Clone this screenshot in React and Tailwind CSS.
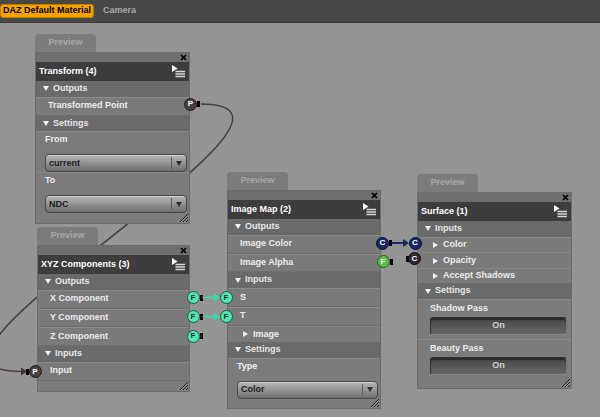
import React from "react";

function CloseX() {
  return (
    <svg width="7" height="7" viewBox="0 0 7 7">
      <path d="M1 1L6 6M6 1L1 6" stroke="#000" strokeWidth="1.7" />
    </svg>
  );
}

function MenuIcon() {
  return (
    <svg width="13" height="13" viewBox="0 0 13 13">
      <polygon points="0,0 0,7 5.5,3.5" fill="#ffffff" />
      <path d="M3.5 6.5H13M3.5 9H13M3.5 11.5H13" stroke="#d6d6d6" strokeWidth="1.3" />
    </svg>
  );
}

function Grip() {
  return (
    <svg width="9" height="9" viewBox="0 0 9 9">
      <path d="M9 1L1 9M9 4L4 9M9 7L7 9" stroke="#1c1c1c" strokeWidth="1" />
      <path d="M9 2.3L2.3 9M9 5.3L5.3 9" stroke="#a8a8a8" strokeWidth="0.8" />
    </svg>
  );
}

function Down({ fill = "#f0f0f0" }) {
  return (
    <svg width="6" height="5" viewBox="0 0 6 5">
      <polygon points="0,0 6,0 3,5" fill={fill} />
    </svg>
  );
}

function Right() {
  return (
    <svg width="5" height="6" viewBox="0 0 5 6">
      <polygon points="0,0 5,3 0,6" fill="#f0f0f0" />
    </svg>
  );
}

function Node({ pos, title, children, bottom }) {
  return (
    <div className={`absolute ${pos} flex flex-col`}>
      <div className="w-[61px] h-[18px] rounded-t-[4px] bg-[#7c7c7c] text-[#a6a6a6] text-[9px] font-bold flex items-center justify-center">
        Preview
      </div>
      <div className="flex flex-col bg-[#7b7b7b] border border-[#6c6c6c]">
        <div className="h-[9px] bg-[#6f6f6f] flex items-center justify-end pr-[2px]">
          <CloseX />
        </div>
        <div className="h-[19px] bg-[#3d3d3d] flex items-center justify-between pl-[3px] pr-[4px] text-white text-[9px] font-bold">
          <span>{title}</span>
          <MenuIcon />
        </div>
        {children}
        <div className={`${bottom} flex items-end justify-end pr-[1px] pb-[1px]`}>
          <Grip />
        </div>
      </div>
    </div>
  );
}

function Header({ label }) {
  return (
    <div className="h-[15.75px] bg-[#6a6a6a] flex items-center pl-[7px] gap-[4px] text-[9px] font-bold text-[#e6e6e6]">
      <Down />
      <span>{label}</span>
    </div>
  );
}

function Row({ label }) {
  return (
    <div className="h-[18.75px] bg-[#7a7a7a] border-t border-t-[#8a8a8a] border-b border-b-[#6e6e6e] flex items-center pl-[12px] text-[9px] font-bold text-[#ececec]">
      {label}
    </div>
  );
}

function Collapsed({ label, h }) {
  return (
    <div className={`${h} bg-[#7a7a7a] border-t border-t-[#868686] flex items-center pl-[15px] gap-[5px] text-[9px] font-bold text-[#ececec]`}>
      <Right />
      <span>{label}</span>
    </div>
  );
}

function Dropdown({ value }) {
  return (
    <div className="h-[18px] rounded-[4px] border border-[#474747] bg-linear-to-b from-[#b6b6b6] via-[#939393] to-[#6d6d6d] shadow-[inset_0_1px_0_#d0d0d0] flex items-center">
      <span className="flex-1 pl-[3px] text-[9px] font-bold text-[#1c1c1c]">{value}</span>
      <div className="w-px h-[12px] bg-[#5c5c5c]" />
      <div className="w-[14px] flex justify-center">
        <Down fill="#2e2e2e" />
      </div>
    </div>
  );
}

function DropField({ label, value }) {
  return (
    <div className="h-[41px] bg-[#7b7b7b] border-t border-t-[#898989] flex flex-col pl-[9px] pr-[2px]">
      <div className="mt-[1px] h-[12px] leading-[12px] text-[9px] font-bold text-[#eeeeee]">{label}</div>
      <div className="mt-[9px]">
        <Dropdown value={value} />
      </div>
    </div>
  );
}

function ButtonField({ label }) {
  return (
    <div className="h-[40px] bg-[#7b7b7b] border-t border-t-[#898989] flex flex-col pl-[12px] pr-[4px]">
      <div className="mt-[2px] h-[12px] leading-[12px] text-[9px] font-bold text-[#eeeeee]">{label}</div>
      <div className="mt-[3px] h-[18px] rounded-[3px] border border-[#333] border-b-[#858585] border-r-[#777] bg-linear-to-b from-[#474747] to-[#666666] shadow-[inset_0_2px_1px_#2a2a2a] flex items-center justify-center text-[9px] font-bold text-[#d0d0d0]">
        On
      </div>
    </div>
  );
}

function Port({ pos, cls, letter }) {
  return (
    <div className={`absolute ${pos} w-[13px] h-[13px] rounded-full border flex items-center justify-center text-[8px] font-bold leading-none ${cls}`}>
      {letter}
    </div>
  );
}

function Stub({ pos }) {
  return <div className={`absolute ${pos} w-[3px] h-[6px] bg-black`} />;
}

const P_CLS = "bg-[#4a4044] border-[#201c1e] text-white";
const TEAL_CLS = "bg-[#52e4b4] border-[#1f5a46] text-[#173a2e]";
const GREEN_CLS = "bg-[#5cbd4c] border-[#2a5522] text-[#f2f2f2]";
const NAVY_CLS = "bg-[#1b2962] border-[#0b1230] text-white";
const DARK_CLS = "bg-[#2e2e2e] border-[#111] text-white";

export default function App() {
  return (
    <div className="relative w-[600px] h-[417px] overflow-hidden bg-[#949494] font-['Liberation_Sans',Arial,sans-serif]">
      <div className="h-[23px] bg-[#474747] border-b border-[#3c3c3c] flex items-center">
        <div className="h-[14px] px-[2px] rounded-[3px] bg-[#f6a300] border border-[#bb7c00] flex items-center text-[9px] font-bold text-black">
          DAZ Default Material
        </div>
        <div className="ml-[9px] text-[9px] font-bold text-[#a9a9a9]">Camera</div>
      </div>

      <svg className="absolute left-0 top-0" width="600" height="417">
        <path d="M201 104 C 360 104, -140 371.5, 21 371.5" fill="none" stroke="#4a4044" strokeWidth="1.5" />
        <polygon points="21,367.5 27,371.5 21,375.5" fill="#3d3438" />
      </svg>

      <Node pos="left-[35px] top-[34px] w-[155px]" title="Transform (4)" bottom="h-[10px]">
        <Header label="Outputs" />
        <Row label="Transformed Point" />
        <Header label="Settings" />
        <DropField label="From" value="current" />
        <DropField label="To" value="NDC" />
      </Node>

      <Node pos="left-[37px] top-[227px] w-[153px]" title="XYZ Components (3)" bottom="h-[10px]">
        <Header label="Outputs" />
        <Row label="X Component" />
        <Row label="Y Component" />
        <Row label="Z Component" />
        <Header label="Inputs" />
        <Row label="Input" />
      </Node>

      <Node pos="left-[227px] top-[172px] w-[154px]" title="Image Map (2)" bottom="h-[9px]">
        <Header label="Outputs" />
        <Row label="Image Color" />
        <Row label="Image Alpha" />
        <Header label="Inputs" />
        <Row label="S" />
        <Row label="T" />
        <Collapsed label="Image" h="h-[16.5px]" />
        <Header label="Settings" />
        <DropField label="Type" value="Color" />
      </Node>

      <Node pos="left-[417px] top-[174px] w-[155px]" title="Surface (1)" bottom="h-[9px]">
        <Header label="Inputs" />
        <Collapsed label="Color" h="h-[15.5px]" />
        <Collapsed label="Opacity" h="h-[15.5px]" />
        <Collapsed label="Accept Shadows" h="h-[15.5px]" />
        <Header label="Settings" />
        <ButtonField label="Shadow Pass" />
        <ButtonField label="Beauty Pass" />
      </Node>

      {/* ports */}
      <Port pos="left-[184px] top-[97.5px]" cls={P_CLS} letter="P" />
      <Stub pos="left-[197px] top-[101px]" />

      <Port pos="left-[186.5px] top-[291px]" cls={TEAL_CLS} letter="F" />
      <Stub pos="left-[199.5px] top-[294.5px]" />
      <Port pos="left-[186.5px] top-[310px]" cls={TEAL_CLS} letter="F" />
      <Stub pos="left-[199.5px] top-[313.5px]" />
      <Port pos="left-[186.5px] top-[329.5px]" cls={TEAL_CLS} letter="F" />
      <Stub pos="left-[199.5px] top-[333px]" />

      <Stub pos="left-[26px] top-[368.5px]" />
      <Port pos="left-[28.5px] top-[365px]" cls={P_CLS} letter="P" />

      <Port pos="left-[219.5px] top-[291px]" cls={TEAL_CLS} letter="F" />
      <Port pos="left-[219.5px] top-[310px]" cls={TEAL_CLS} letter="F" />

      <Port pos="left-[376px] top-[236.5px]" cls={NAVY_CLS} letter="C" />
      <Stub pos="left-[389px] top-[240px]" />
      <Port pos="left-[376.5px] top-[255px]" cls={GREEN_CLS} letter="F" />
      <Stub pos="left-[389.5px] top-[258.5px]" />

      <Port pos="left-[408.5px] top-[236.5px]" cls={NAVY_CLS} letter="C" />
      <Stub pos="left-[405.5px] top-[255.5px]" />
      <Port pos="left-[408px] top-[252px]" cls={DARK_CLS} letter="C" />

      <svg className="absolute left-0 top-0 pointer-events-none" width="600" height="417">
        <path d="M202.5 297.5H215" stroke="#3fd6a5" strokeWidth="2" />
        <polygon points="214,293.5 220,297.5 214,301.5" fill="#3fd6a5" />
        <path d="M202.5 316.5H215" stroke="#3fd6a5" strokeWidth="2" />
        <polygon points="214,312.5 220,316.5 214,320.5" fill="#3fd6a5" />
        <path d="M392 243H404" stroke="#1c2a63" strokeWidth="2" />
        <polygon points="403,239 409,243 403,247" fill="#1c2a63" />
      </svg>
    </div>
  );
}
